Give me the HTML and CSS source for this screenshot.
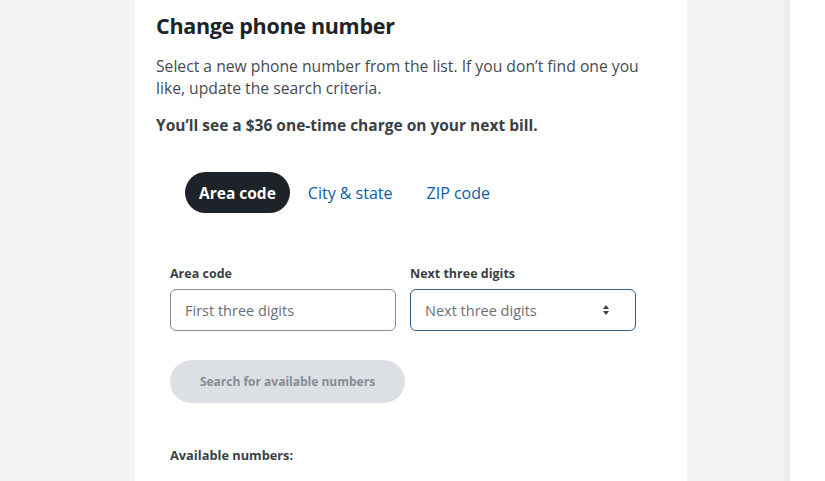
FILE: index.html
```html
<!DOCTYPE html>
<html lang="en">
<head>
<meta charset="utf-8">
<title>Change phone number</title>
<link rel="stylesheet" href="styles.css">
</head>
<body>
<div class="page">
  <div class="side-left"></div>
  <main class="card">
    <h1 class="title">Change phone number</h1>
    <p class="intro">Select a new phone number from the list. If you don’t find one you like, update the search criteria.</p>
    <p class="charge">You’ll see a $36 one-time charge on your next bill.</p>
    <div class="tabs">
      <button class="tab tab-active">Area code</button>
      <button class="tab">City &amp; state</button>
      <button class="tab">ZIP code</button>
    </div>
    <div class="fields">
      <div class="field">
        <label class="label">Area code</label>
        <div class="input">First three digits</div>
      </div>
      <div class="field">
        <label class="label">Next three digits</label>
        <div class="input input-focus">Next three digits
          <svg class="spin" width="8" height="12" viewBox="0 0 8 12"><path d="M4 1 L7 5 L1 5 Z" fill="#3a3d42"/><path d="M4 11 L7 7 L1 7 Z" fill="#3a3d42"/></svg>
        </div>
      </div>
    </div>
    <button class="search">Search for available numbers</button>
    <div class="avail">Available numbers:</div>
  </main>
  <div class="side-right"></div>
  <div class="scroll"></div>
  <div class="edge"></div>
</div>
</body>
</html>
```
FILE: styles.css
```css
html, body { margin: 0; padding: 0; }
body { font-family: "Open Sans", "Liberation Sans", sans-serif; color: #1d2329; }
.page { display: flex; height: 481px; overflow: hidden; }
.side-left { width: 135px; background: #f2f3f5; }
.card { width: 552px; background: #fff; padding: 10px 21px 0; box-sizing: border-box; }
.side-right { width: 97px; background: #f2f3f5; }
.scroll { width: 6px; background: #ebecee; }
.edge { flex: 1; background: #fff; }
.title { font-size: 21.5px; font-weight: 700; margin: 0; line-height: 32px; letter-spacing: -0.3px; }
.intro { font-size: 15.7px; line-height: 22px; color: #454b52; margin: 13px 0 0; max-width: 500px; }
.charge { font-size: 15.5px; font-weight: 700; color: #3a3f45; margin: 15px 0 0; line-height: 22px; }
.tabs { display: flex; align-items: center; gap: 18px; margin: 36px 0 0 29px; }
.tab { font-family: inherit; font-size: 16px; border: none; background: none; color: #0c5da5; padding: 0; height: 41px; cursor: pointer; }
.tab-active { background: #1d2329; color: #fff; font-weight: 700; border-radius: 21px; padding: 0 14px; font-size: 15.5px; }
.tab + .tab + .tab { margin-left: 16px; }
.fields { display: flex; gap: 14px; margin: 53px 0 0 14px; }
.field { width: 226px; }
.label { display: block; font-size: 12.5px; font-weight: 700; color: #3a3f45; line-height: 16px; margin-bottom: 7px; }
.input { height: 42px; box-sizing: border-box; border: 1px solid #878c94; border-radius: 6px; padding: 0 14px; display: flex; align-items: center; justify-content: space-between; font-size: 14.5px; color: #6b7078; }
.input-focus { border-color: #335e80; }
.spin { margin-right: 11px; }
.search { display: block; margin: 29px 0 0 14px; width: 235px; height: 43px; border: none; border-radius: 22px; background: #dcdfe3; color: #878c94; font-family: inherit; font-size: 12px; font-weight: 700; }
.avail { margin: 43px 0 0 14px; font-size: 12.8px; font-weight: 700; color: #3a3f45; }
```
